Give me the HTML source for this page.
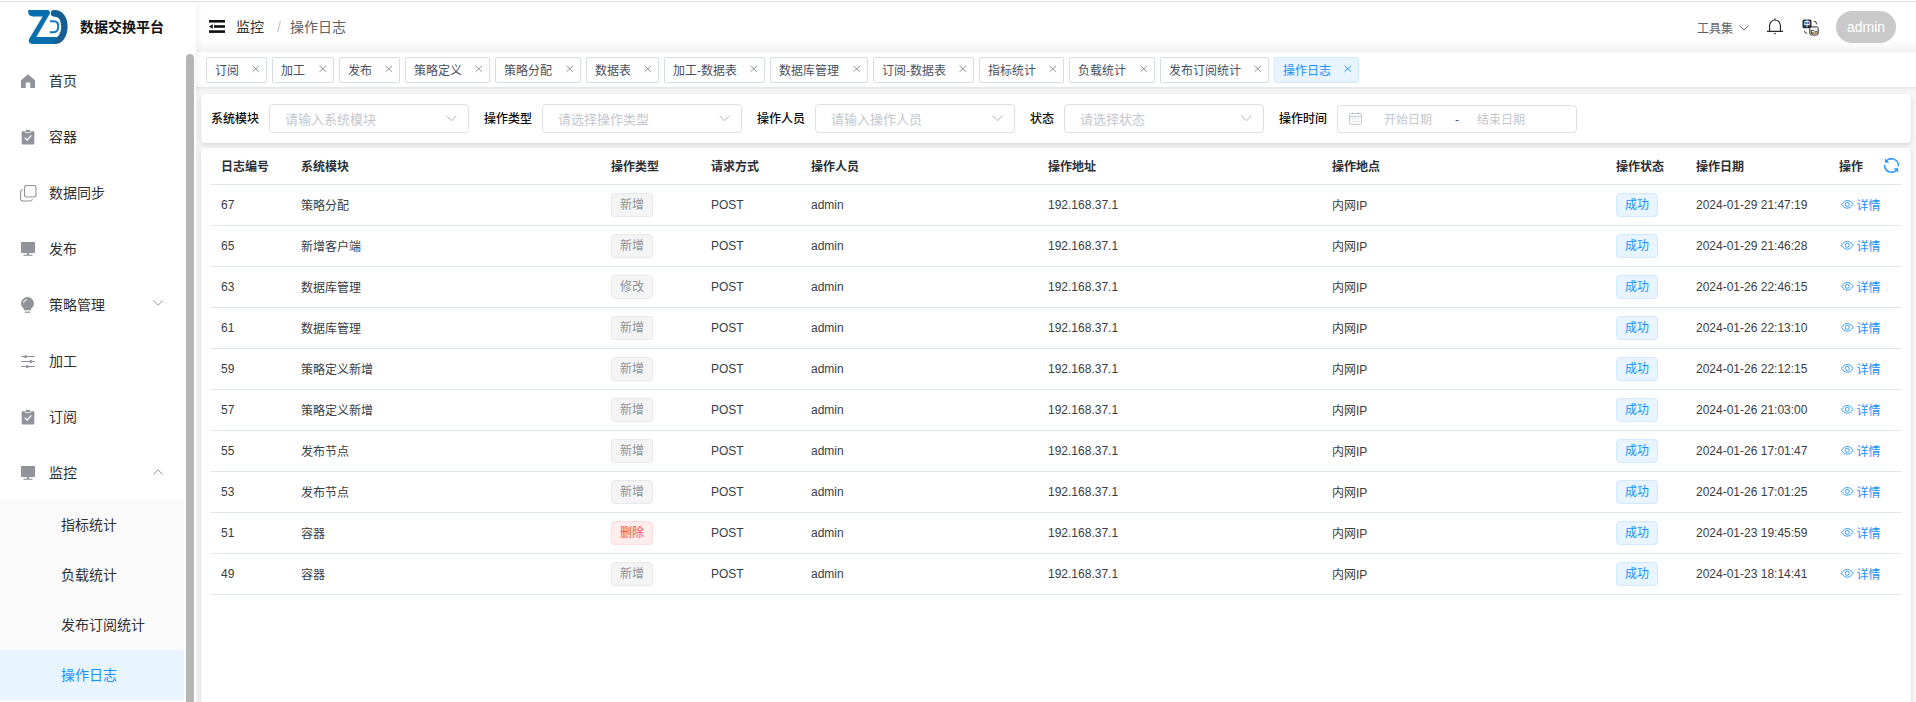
<!DOCTYPE html><html lang="zh-CN"><head><meta charset="utf-8"><title>操作日志</title><style>
*{box-sizing:border-box;margin:0;padding:0}
html,body{width:1916px;height:702px;overflow:hidden;background:#fff}
body{position:relative;font-family:"Liberation Sans", "Noto Sans CJK SC", sans-serif;font-size:12px;color:#606266;-webkit-font-smoothing:antialiased}
.abs{position:absolute}
#topline{left:0;top:1px;width:1916px;height:1px;background:#dcdee0}
#sidebar{left:0;top:2px;width:196px;height:700px;background:#fff}
#logo{left:28px;top:8px;overflow:visible}
#title{left:80px;top:15px;font-size:14px;font-weight:700;color:#111;line-height:20px;white-space:nowrap}
.mi{position:absolute;left:0;width:184px;height:56px}
.mi svg{position:absolute}
.mi span{position:absolute;left:49px;top:19px;line-height:20px;font-size:14px;color:#303133;white-space:nowrap}
#sub{left:0;top:498px;width:184px;height:202px;background:#fafafa}
.si{position:absolute;left:0;width:184px;height:50px}
.si span{position:absolute;left:61px;top:15px;line-height:20px;font-size:14px;color:#303133;white-space:nowrap}
.si.act{background:#e8f4ff}
.si.act span{color:#1890ff}
#sbar{left:186px;top:52px;width:8px;height:660px;background:#b5b5b5;border-radius:4px}
#main{left:196px;top:2px;width:1720px;height:700px;background:#f7f7f7}
#navbar{left:0;top:0;width:1720px;height:50px;background:linear-gradient(to bottom,#fff 0,#fff 37px,#fcfcfc 41px,#f8f8f8 45px,#f3f3f3 50px)}
#navbar .t{position:absolute;white-space:nowrap;line-height:20px}
#tags{left:0;top:50px;width:1720px;height:36px;background:#fff;border-bottom:1px solid #e6e7eb;box-shadow:0 1px 3px 0 rgba(0,0,0,.07)}
.tag{position:absolute;top:5px;height:26px;border:1px solid #d8dce5;border-radius:2px;background:#fff;color:#495060;font-size:12px;line-height:26px;padding-left:8px;white-space:nowrap}
.tag svg{position:absolute;right:6.5px;top:6.5px}
.tag.act{background:#e8f4ff;border-color:#d1e9ff;color:#1890ff}
.card{position:absolute;background:#fff;border-radius:4px;box-shadow:0 2px 4px rgba(0,0,0,.11),0 0 6px rgba(0,0,0,.04)}
.lbl{position:absolute;top:14.5px;line-height:20px;font-size:12px;color:#0a0a0a;font-weight:500;white-space:nowrap}
.inp{position:absolute;top:10px;height:29px;border:1px solid #dcdfe6;border-radius:4px;background:#fff}
.inp .ph{position:absolute;left:15px;top:5px;line-height:20px;font-size:13px;color:#c4c7ce;white-space:nowrap}
.inp svg{position:absolute}
table{border-collapse:collapse;table-layout:fixed;position:absolute;left:10px;top:0;width:1690px}
th,td{text-align:left;padding:0 0 0 10px;font-size:12px;white-space:nowrap;border-bottom:1px solid #dfe6ec;vertical-align:middle;overflow:visible}
th{height:36px;color:#2b2f36;font-weight:700}
td{height:41px;color:#3a3d42}
.tg{display:inline-block;height:24px;line-height:22px;padding:0 8px;border-radius:4px;border:1px solid #e9e9eb;background:#f4f4f5;color:#909399;font-size:12px;vertical-align:middle}
.tg.ok{background:#e8f4ff;border-color:#d1e9ff;color:#1890ff}
.tg.del{background:#ffeded;border-color:#ffdbdb;color:#ff4949}
.lnk{color:#1890ff;display:inline-flex;align-items:center}
.lnk svg{margin-right:3px;margin-left:2px}
</style></head><body>
<div id="topline" class="abs"></div>
<div id="sidebar" class="abs">
<svg id="logo" class="abs" width="42" height="36" viewBox="0 0 42 36">
<path d="M0.2,0 H19 C21.6,0 22.8,2 21.5,4.2 L8.3,26.9 H27.5 V33.9 H4.6 C1.4,33.9 -0.2,31 1.4,28.4 L14.7,6.4 H4.8 C2,6.4 0.2,4.6 0.2,2 Z" fill="#086eae"/>
<path d="M26,3.2 C33.4,3.2 36.4,9.5 36.4,16.6 C36.4,25 32.5,30.7 26.5,30.7" fill="none" stroke="#145e94" stroke-width="6.4"/><circle cx="26" cy="3.2" r="3.2" fill="#145e94"/>
<path d="M22,11.2 H26 C29.4,11.2 30.3,13.8 30.3,16.6 C30.3,19.6 29,22.2 25.6,22.2 H21.8" fill="none" stroke="#1178c0" stroke-width="2"/>
</svg>
<div id="title" class="abs">数据交换平台</div>
<div class="mi" style="top:50px"><svg style="left:21px;top:22px" width="14" height="14" viewBox="0 0 14 14"><path d="M7,0.3 L14,6.2 V14 H9.2 V8.6 H4.8 V14 H0 V6.2 Z" fill="#909399"/></svg><span>首页</span></div>
<div class="mi" style="top:106px"><svg style="left:21px;top:21px" width="14" height="16" viewBox="0 0 14 16"><rect x="0.7" y="2.2" width="12.6" height="13.2" rx="0.8" fill="#909399"/><rect x="4.4" y="0.6" width="5.2" height="3" rx="0.8" fill="#909399" stroke="#fff" stroke-width="0.8"/><path d="M3.6,8.6 L6,11 L10.4,6.4" fill="none" stroke="#fff" stroke-width="1.3"/></svg><span>容器</span></div>
<div class="mi" style="top:162px"><svg style="left:20px;top:21px" width="17" height="17" viewBox="0 0 17 17"><rect x="4.5" y="0.5" width="11.5" height="11.5" rx="2.2" fill="none" stroke="#909399" stroke-width="1.1"/><path d="M2.6,4.6 C1.2,4.8 0.6,5.6 0.6,7 V13.4 C0.6,15 1.6,16 3.2,16 H10 C11.4,16 12.2,15.4 12.4,14" fill="none" stroke="#909399" stroke-width="1.1"/></svg><span>数据同步</span></div>
<div class="mi" style="top:218px"><svg style="left:21px;top:22px" width="14" height="15" viewBox="0 0 14 15"><rect x="0" y="0" width="14" height="11" fill="#909399"/><rect x="6" y="11" width="2" height="2" fill="#909399"/><rect x="2.5" y="12.7" width="9" height="1.1" fill="#909399"/></svg><span>发布</span></div>
<div class="mi" style="top:274px"><svg style="left:21px;top:21px" width="13" height="17" viewBox="0 0 13 17"><path d="M6.5,0 A6.5,6.5 0 0 1 13,6.5 C13,9 11.4,10.4 10.2,11.6 V13.2 H2.8 V11.6 C1.6,10.4 0,9 0,6.5 A6.5,6.5 0 0 1 6.5,0 Z" fill="#909399"/><rect x="3.8" y="14.6" width="5.4" height="1.2" fill="#909399"/><path d="M2.6,6 A3.8,3.8 0 0 1 6,2.6" fill="none" stroke="#e4e5e8" stroke-width="1.1"/></svg><span>策略管理</span><svg style="left:153px;top:24px" width="10" height="6" viewBox="0 0 10 6"><path d="M0.4,0.6 L5,5.2 L9.6,0.6" fill="none" stroke="#909399" stroke-width="1"/></svg></div>
<div class="mi" style="top:330px"><svg style="left:21px;top:22px" width="14" height="15" viewBox="0 0 14 15"><g stroke="#909399" stroke-width="1.1"><path d="M0,2.5 H14 M0,7.5 H14 M0,12.5 H14"/></g><circle cx="4.6" cy="2.5" r="1.6" fill="#909399"/><circle cx="10" cy="7.5" r="1.6" fill="#909399"/><circle cx="6.2" cy="12.5" r="1.6" fill="#909399"/></svg><span>加工</span></div>
<div class="mi" style="top:386px"><svg style="left:21px;top:21px" width="14" height="16" viewBox="0 0 14 16"><rect x="0.7" y="2.2" width="12.6" height="13.2" rx="0.8" fill="#909399"/><rect x="4.4" y="0.6" width="5.2" height="3" rx="0.8" fill="#909399" stroke="#fff" stroke-width="0.8"/><path d="M3.6,8.6 L6,11 L10.4,6.4" fill="none" stroke="#fff" stroke-width="1.3"/></svg><span>订阅</span></div>
<div class="mi" style="top:442px"><svg style="left:21px;top:22px" width="14" height="15" viewBox="0 0 14 15"><rect x="0" y="0" width="14" height="11" fill="#909399"/><rect x="6" y="11" width="2" height="2" fill="#909399"/><rect x="2.5" y="12.7" width="9" height="1.1" fill="#909399"/></svg><span>监控</span><svg style="left:153px;top:25px" width="10" height="6" viewBox="0 0 10 6"><path d="M0.4,5.4 L5,0.8 L9.6,5.4" fill="none" stroke="#909399" stroke-width="1"/></svg></div>
<div id="sub" class="abs">
<div class="si" style="top:0px"><span>指标统计</span></div>
<div class="si" style="top:50px"><span>负载统计</span></div>
<div class="si" style="top:100px"><span>发布订阅统计</span></div>
<div class="si act" style="top:150px"><span>操作日志</span></div>
</div>
<div id="sbar" class="abs"></div>
</div>
<div id="main" class="abs">
<div id="navbar" class="abs">
<svg class="abs" style="left:13px;top:18px" width="16" height="13" viewBox="0 0 16 13"><rect x="0" y="0" width="16" height="2.6" fill="#111"/><rect x="5" y="5.2" width="11" height="2.6" fill="#111"/><rect x="0" y="10.3" width="16" height="2.6" fill="#111"/><path d="M0,6.5 L3.8,4.2 V8.8 Z" fill="#111"/></svg>
<div class="t" style="left:40px;top:15px;font-size:14px;color:#303133">监控</div>
<div class="t" style="left:81px;top:15px;font-size:14px;color:#c0c4cc">/</div>
<div class="t" style="left:94px;top:15px;font-size:14px;color:#5e6166">操作日志</div>
<div class="t" style="left:1501px;top:17px;font-size:12px;color:#606266">工具集</div>
<svg class="abs" style="left:1543px;top:23px" width="10" height="6" viewBox="0 0 10 6"><path d="M0.6,0.6 L5,5 L9.4,0.6" fill="none" stroke="#606266" stroke-width="1"/></svg>
<svg class="abs" style="left:1570px;top:16px" width="18" height="17" viewBox="0 0 18 17"><path d="M9,0.6 V1.8 M3.6,13.2 V7.6 A5.4,5.6 0 0 1 14.4,7.6 V13.2 M1,13.4 H17" fill="none" stroke="#26282c" stroke-width="1.15"/><circle cx="9" cy="15.6" r="0.8" fill="#26282c"/></svg>
<svg class="abs" style="left:1605.5px;top:16.5px" width="18" height="18" viewBox="0 0 18 18"><rect x="0.5" y="0.6" width="9" height="8.7" rx="1.6" fill="#2a2c30"/><text x="5" y="7.4" font-size="6.5" font-weight="700" fill="#fff" text-anchor="middle" font-family='Liberation Sans, Noto Sans CJK SC, sans-serif'>中</text><path d="M11.9,2.5 H12.6 A1.8,1.8 0 0 1 14.4,4.3 V5.2" fill="none" stroke="#2a2c30" stroke-width="1"/><path d="M2.7,11.7 V12.4 A1.8,1.8 0 0 0 4.5,14.2 H5.2" fill="none" stroke="#2a2c30" stroke-width="1"/><rect x="7.8" y="7.9" width="8.4" height="8.1" rx="1.7" fill="#f1f1f1" stroke="#2a2c30" stroke-width="1"/><text x="12" y="14.6" font-size="5.6" font-weight="700" fill="#2a2c30" text-anchor="middle" font-family='Liberation Sans, Noto Sans CJK SC, sans-serif'>En</text></svg>
<div class="abs" style="left:1640px;top:9px;width:60px;height:32px;border-radius:16px;background:#c9c9c9;color:#fff;font-size:14px;line-height:32px;text-align:center">admin</div>
</div>
<div id="tags" class="abs">
<div class="tag" style="left:10px;width:61px">订阅<svg width="8" height="8" viewBox="0 0 8 8"><path d="M0.5,0.8 L7,6.8 M7,0.8 L0.5,6.8" stroke="#80848d" stroke-width="0.85" fill="none"/></svg></div>
<div class="tag" style="left:76px;width:62px">加工<svg width="8" height="8" viewBox="0 0 8 8"><path d="M0.5,0.8 L7,6.8 M7,0.8 L0.5,6.8" stroke="#80848d" stroke-width="0.85" fill="none"/></svg></div>
<div class="tag" style="left:143px;width:61px">发布<svg width="8" height="8" viewBox="0 0 8 8"><path d="M0.5,0.8 L7,6.8 M7,0.8 L0.5,6.8" stroke="#80848d" stroke-width="0.85" fill="none"/></svg></div>
<div class="tag" style="left:209px;width:85px">策略定义<svg width="8" height="8" viewBox="0 0 8 8"><path d="M0.5,0.8 L7,6.8 M7,0.8 L0.5,6.8" stroke="#80848d" stroke-width="0.85" fill="none"/></svg></div>
<div class="tag" style="left:299px;width:86px">策略分配<svg width="8" height="8" viewBox="0 0 8 8"><path d="M0.5,0.8 L7,6.8 M7,0.8 L0.5,6.8" stroke="#80848d" stroke-width="0.85" fill="none"/></svg></div>
<div class="tag" style="left:390px;width:73px">数据表<svg width="8" height="8" viewBox="0 0 8 8"><path d="M0.5,0.8 L7,6.8 M7,0.8 L0.5,6.8" stroke="#80848d" stroke-width="0.85" fill="none"/></svg></div>
<div class="tag" style="left:468px;width:101px">加工-数据表<svg width="8" height="8" viewBox="0 0 8 8"><path d="M0.5,0.8 L7,6.8 M7,0.8 L0.5,6.8" stroke="#80848d" stroke-width="0.85" fill="none"/></svg></div>
<div class="tag" style="left:574px;width:98px">数据库管理<svg width="8" height="8" viewBox="0 0 8 8"><path d="M0.5,0.8 L7,6.8 M7,0.8 L0.5,6.8" stroke="#80848d" stroke-width="0.85" fill="none"/></svg></div>
<div class="tag" style="left:677px;width:101px">订阅-数据表<svg width="8" height="8" viewBox="0 0 8 8"><path d="M0.5,0.8 L7,6.8 M7,0.8 L0.5,6.8" stroke="#80848d" stroke-width="0.85" fill="none"/></svg></div>
<div class="tag" style="left:783px;width:85px">指标统计<svg width="8" height="8" viewBox="0 0 8 8"><path d="M0.5,0.8 L7,6.8 M7,0.8 L0.5,6.8" stroke="#80848d" stroke-width="0.85" fill="none"/></svg></div>
<div class="tag" style="left:873px;width:86px">负载统计<svg width="8" height="8" viewBox="0 0 8 8"><path d="M0.5,0.8 L7,6.8 M7,0.8 L0.5,6.8" stroke="#80848d" stroke-width="0.85" fill="none"/></svg></div>
<div class="tag" style="left:964px;width:109px">发布订阅统计<svg width="8" height="8" viewBox="0 0 8 8"><path d="M0.5,0.8 L7,6.8 M7,0.8 L0.5,6.8" stroke="#80848d" stroke-width="0.85" fill="none"/></svg></div>
<div class="tag act" style="left:1078px;width:85px">操作日志<svg width="8" height="8" viewBox="0 0 8 8"><path d="M0.5,0.8 L7,6.8 M7,0.8 L0.5,6.8" stroke="#1890ff" stroke-width="0.85" fill="none"/></svg></div>
</div>
<div class="card" style="left:5px;top:92px;width:1710px;height:49px">
<div class="lbl" style="left:10px">系统模块</div>
<div class="inp" style="left:68px;width:200px"><span class="ph">请输入系统模块</span><svg style="right:11px;top:9.5px" width="11" height="7" viewBox="0 0 11 7"><path d="M0.5,0.6 L5.5,5.8 L10.5,0.6" fill="none" stroke="#b1b4bb" stroke-width="1"/></svg></div>
<div class="lbl" style="left:283px">操作类型</div>
<div class="inp" style="left:341px;width:200px"><span class="ph">请选择操作类型</span><svg style="right:11px;top:9.5px" width="11" height="7" viewBox="0 0 11 7"><path d="M0.5,0.6 L5.5,5.8 L10.5,0.6" fill="none" stroke="#b1b4bb" stroke-width="1"/></svg></div>
<div class="lbl" style="left:556px">操作人员</div>
<div class="inp" style="left:614px;width:200px"><span class="ph">请输入操作人员</span><svg style="right:11px;top:9.5px" width="11" height="7" viewBox="0 0 11 7"><path d="M0.5,0.6 L5.5,5.8 L10.5,0.6" fill="none" stroke="#b1b4bb" stroke-width="1"/></svg></div>
<div class="lbl" style="left:829px">状态</div>
<div class="inp" style="left:863px;width:200px"><span class="ph">请选择状态</span><svg style="right:11px;top:9.5px" width="11" height="7" viewBox="0 0 11 7"><path d="M0.5,0.6 L5.5,5.8 L10.5,0.6" fill="none" stroke="#b1b4bb" stroke-width="1"/></svg></div>
<div class="lbl" style="left:1078px">操作时间</div>
<div class="inp" style="left:1136px;width:240px;top:11px;height:28px">
<svg style="left:10.6px;top:6.4px" width="13" height="13" viewBox="0 0 14 14"><rect x="0.6" y="1.6" width="12.8" height="11.6" rx="1.2" fill="none" stroke="#bfc3cb" stroke-width="1"/><path d="M0.6,4.8 H13.4 M4,0.4 V2.6 M10,0.4 V2.6" stroke="#bfc3cb" stroke-width="1" fill="none"/><path d="M3.2,7.4 H4.6 M6.3,7.4 H7.7 M9.4,7.4 H10.8 M3.2,10.2 H4.6 M6.3,10.2 H7.7 M9.4,10.2 H10.8" stroke="#bfc3cb" stroke-width="1" fill="none"/></svg>
<span class="ph" style="left:46px;top:4px;font-size:12px">开始日期</span><span class="ph" style="left:117px;top:4px;font-size:12px;color:#50545b">-</span><span class="ph" style="left:139px;top:4px;font-size:12px">结束日期</span>
</div>
</div>
<div class="card" style="left:5px;top:146px;width:1710px;height:600px">
<table><colgroup><col style="width:80px"><col style="width:310px"><col style="width:100px"><col style="width:100px"><col style="width:237px"><col style="width:284px"><col style="width:284px"><col style="width:80px"><col style="width:143px"><col style="width:72px"></colgroup>
<thead><tr><th>日志编号</th><th>系统模块</th><th>操作类型</th><th>请求方式</th><th>操作人员</th><th>操作地址</th><th>操作地点</th><th>操作状态</th><th>操作日期</th><th>操作</th></tr></thead><tbody>
<tr><td>67</td><td>策略分配</td><td><span class="tg">新增</span></td><td>POST</td><td>admin</td><td>192.168.37.1</td><td>内网IP</td><td><span class="tg ok">成功</span></td><td>2024-01-29 21:47:19</td><td><span class="lnk"><svg width="12.5" height="8.7" viewBox="0 0 13 9" style="position:relative;top:0.2px"><path d="M0.6,4.5 C2.2,1.8 4.2,0.5 6.5,0.5 C8.8,0.5 10.8,1.8 12.4,4.5 C10.8,7.2 8.8,8.5 6.5,8.5 C4.2,8.5 2.2,7.2 0.6,4.5 Z" fill="none" stroke="#1890ff" stroke-width="0.9"/><circle cx="6.5" cy="4.5" r="2.1" fill="none" stroke="#1890ff" stroke-width="0.9"/></svg>详情</span></td></tr>
<tr><td>65</td><td>新增客户端</td><td><span class="tg">新增</span></td><td>POST</td><td>admin</td><td>192.168.37.1</td><td>内网IP</td><td><span class="tg ok">成功</span></td><td>2024-01-29 21:46:28</td><td><span class="lnk"><svg width="12.5" height="8.7" viewBox="0 0 13 9" style="position:relative;top:0.2px"><path d="M0.6,4.5 C2.2,1.8 4.2,0.5 6.5,0.5 C8.8,0.5 10.8,1.8 12.4,4.5 C10.8,7.2 8.8,8.5 6.5,8.5 C4.2,8.5 2.2,7.2 0.6,4.5 Z" fill="none" stroke="#1890ff" stroke-width="0.9"/><circle cx="6.5" cy="4.5" r="2.1" fill="none" stroke="#1890ff" stroke-width="0.9"/></svg>详情</span></td></tr>
<tr><td>63</td><td>数据库管理</td><td><span class="tg">修改</span></td><td>POST</td><td>admin</td><td>192.168.37.1</td><td>内网IP</td><td><span class="tg ok">成功</span></td><td>2024-01-26 22:46:15</td><td><span class="lnk"><svg width="12.5" height="8.7" viewBox="0 0 13 9" style="position:relative;top:0.2px"><path d="M0.6,4.5 C2.2,1.8 4.2,0.5 6.5,0.5 C8.8,0.5 10.8,1.8 12.4,4.5 C10.8,7.2 8.8,8.5 6.5,8.5 C4.2,8.5 2.2,7.2 0.6,4.5 Z" fill="none" stroke="#1890ff" stroke-width="0.9"/><circle cx="6.5" cy="4.5" r="2.1" fill="none" stroke="#1890ff" stroke-width="0.9"/></svg>详情</span></td></tr>
<tr><td>61</td><td>数据库管理</td><td><span class="tg">新增</span></td><td>POST</td><td>admin</td><td>192.168.37.1</td><td>内网IP</td><td><span class="tg ok">成功</span></td><td>2024-01-26 22:13:10</td><td><span class="lnk"><svg width="12.5" height="8.7" viewBox="0 0 13 9" style="position:relative;top:0.2px"><path d="M0.6,4.5 C2.2,1.8 4.2,0.5 6.5,0.5 C8.8,0.5 10.8,1.8 12.4,4.5 C10.8,7.2 8.8,8.5 6.5,8.5 C4.2,8.5 2.2,7.2 0.6,4.5 Z" fill="none" stroke="#1890ff" stroke-width="0.9"/><circle cx="6.5" cy="4.5" r="2.1" fill="none" stroke="#1890ff" stroke-width="0.9"/></svg>详情</span></td></tr>
<tr><td>59</td><td>策略定义新增</td><td><span class="tg">新增</span></td><td>POST</td><td>admin</td><td>192.168.37.1</td><td>内网IP</td><td><span class="tg ok">成功</span></td><td>2024-01-26 22:12:15</td><td><span class="lnk"><svg width="12.5" height="8.7" viewBox="0 0 13 9" style="position:relative;top:0.2px"><path d="M0.6,4.5 C2.2,1.8 4.2,0.5 6.5,0.5 C8.8,0.5 10.8,1.8 12.4,4.5 C10.8,7.2 8.8,8.5 6.5,8.5 C4.2,8.5 2.2,7.2 0.6,4.5 Z" fill="none" stroke="#1890ff" stroke-width="0.9"/><circle cx="6.5" cy="4.5" r="2.1" fill="none" stroke="#1890ff" stroke-width="0.9"/></svg>详情</span></td></tr>
<tr><td>57</td><td>策略定义新增</td><td><span class="tg">新增</span></td><td>POST</td><td>admin</td><td>192.168.37.1</td><td>内网IP</td><td><span class="tg ok">成功</span></td><td>2024-01-26 21:03:00</td><td><span class="lnk"><svg width="12.5" height="8.7" viewBox="0 0 13 9" style="position:relative;top:0.2px"><path d="M0.6,4.5 C2.2,1.8 4.2,0.5 6.5,0.5 C8.8,0.5 10.8,1.8 12.4,4.5 C10.8,7.2 8.8,8.5 6.5,8.5 C4.2,8.5 2.2,7.2 0.6,4.5 Z" fill="none" stroke="#1890ff" stroke-width="0.9"/><circle cx="6.5" cy="4.5" r="2.1" fill="none" stroke="#1890ff" stroke-width="0.9"/></svg>详情</span></td></tr>
<tr><td>55</td><td>发布节点</td><td><span class="tg">新增</span></td><td>POST</td><td>admin</td><td>192.168.37.1</td><td>内网IP</td><td><span class="tg ok">成功</span></td><td>2024-01-26 17:01:47</td><td><span class="lnk"><svg width="12.5" height="8.7" viewBox="0 0 13 9" style="position:relative;top:0.2px"><path d="M0.6,4.5 C2.2,1.8 4.2,0.5 6.5,0.5 C8.8,0.5 10.8,1.8 12.4,4.5 C10.8,7.2 8.8,8.5 6.5,8.5 C4.2,8.5 2.2,7.2 0.6,4.5 Z" fill="none" stroke="#1890ff" stroke-width="0.9"/><circle cx="6.5" cy="4.5" r="2.1" fill="none" stroke="#1890ff" stroke-width="0.9"/></svg>详情</span></td></tr>
<tr><td>53</td><td>发布节点</td><td><span class="tg">新增</span></td><td>POST</td><td>admin</td><td>192.168.37.1</td><td>内网IP</td><td><span class="tg ok">成功</span></td><td>2024-01-26 17:01:25</td><td><span class="lnk"><svg width="12.5" height="8.7" viewBox="0 0 13 9" style="position:relative;top:0.2px"><path d="M0.6,4.5 C2.2,1.8 4.2,0.5 6.5,0.5 C8.8,0.5 10.8,1.8 12.4,4.5 C10.8,7.2 8.8,8.5 6.5,8.5 C4.2,8.5 2.2,7.2 0.6,4.5 Z" fill="none" stroke="#1890ff" stroke-width="0.9"/><circle cx="6.5" cy="4.5" r="2.1" fill="none" stroke="#1890ff" stroke-width="0.9"/></svg>详情</span></td></tr>
<tr><td>51</td><td>容器</td><td><span class="tg del">删除</span></td><td>POST</td><td>admin</td><td>192.168.37.1</td><td>内网IP</td><td><span class="tg ok">成功</span></td><td>2024-01-23 19:45:59</td><td><span class="lnk"><svg width="12.5" height="8.7" viewBox="0 0 13 9" style="position:relative;top:0.2px"><path d="M0.6,4.5 C2.2,1.8 4.2,0.5 6.5,0.5 C8.8,0.5 10.8,1.8 12.4,4.5 C10.8,7.2 8.8,8.5 6.5,8.5 C4.2,8.5 2.2,7.2 0.6,4.5 Z" fill="none" stroke="#1890ff" stroke-width="0.9"/><circle cx="6.5" cy="4.5" r="2.1" fill="none" stroke="#1890ff" stroke-width="0.9"/></svg>详情</span></td></tr>
<tr><td>49</td><td>容器</td><td><span class="tg">新增</span></td><td>POST</td><td>admin</td><td>192.168.37.1</td><td>内网IP</td><td><span class="tg ok">成功</span></td><td>2024-01-23 18:14:41</td><td><span class="lnk"><svg width="12.5" height="8.7" viewBox="0 0 13 9" style="position:relative;top:0.2px"><path d="M0.6,4.5 C2.2,1.8 4.2,0.5 6.5,0.5 C8.8,0.5 10.8,1.8 12.4,4.5 C10.8,7.2 8.8,8.5 6.5,8.5 C4.2,8.5 2.2,7.2 0.6,4.5 Z" fill="none" stroke="#1890ff" stroke-width="0.9"/><circle cx="6.5" cy="4.5" r="2.1" fill="none" stroke="#1890ff" stroke-width="0.9"/></svg>详情</span></td></tr>
</tbody></table>
<svg class="abs" style="left:1681.9px;top:9.4px" width="17" height="17" viewBox="0 0 17 17"><path d="M15.4,8.7 A6.9,6.9 0 0 0 3.2,4.2 M1.6,8.3 A6.9,6.9 0 0 0 13.6,13" fill="none" stroke="#2a97ff" stroke-width="1.5" stroke-linecap="round"/><path d="M1.9,1.2 V5.7 H6.3 Z" fill="#2a97ff"/><path d="M15.2,15.7 V11.2 H10.7 Z" fill="#2a97ff"/></svg>
</div>
</div>
<div class="abs" style="left:196px;top:2px;width:6px;height:700px;background:linear-gradient(to right,rgba(0,0,0,.04),rgba(0,0,0,0))"></div>
</body></html>
